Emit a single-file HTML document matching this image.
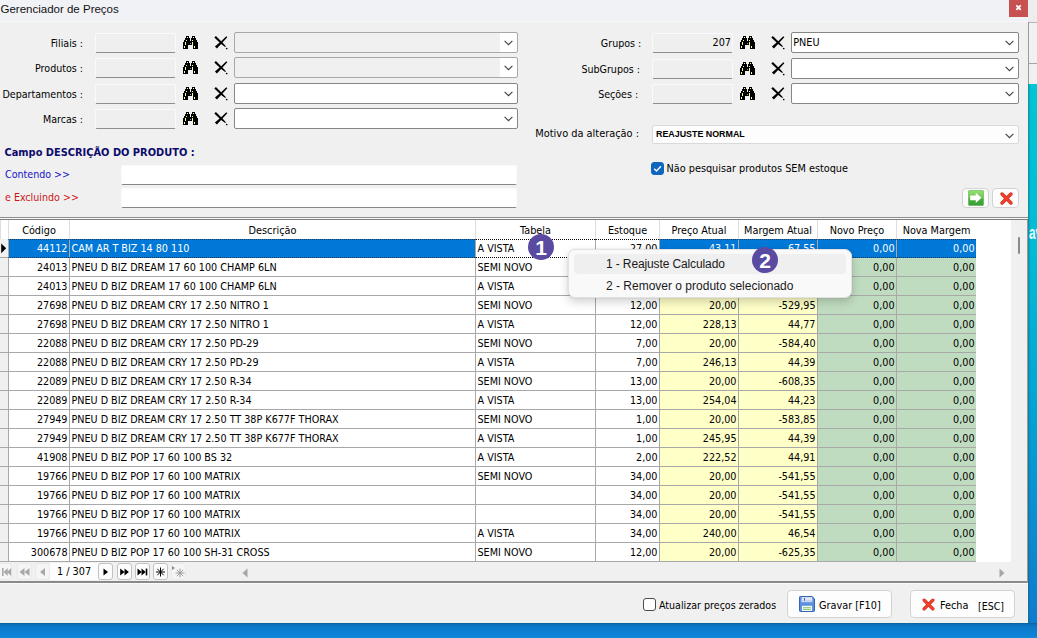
<!DOCTYPE html>
<html lang="pt-BR"><head><meta charset="utf-8"><title>Gerenciador de Preços</title>
<style>
*{box-sizing:border-box;margin:0;padding:0}
html,body{width:1037px;height:638px;overflow:hidden}
body{position:relative;background:#0b7fd0;font-family:"DejaVu Sans Condensed","Liberation Sans",sans-serif;font-size:10.8px;color:#000}
.abs,.abs>*{position:absolute}
#desk-r{left:1028px;top:0;width:9px;height:638px;background:linear-gradient(#00c6d6 0,#00c6d6 84px,#00bcd6 250px,#02a6d6 400px,#0892d4 500px,#0d80cf 600px,#0d7ccc 638px)}
#desk-r i{position:absolute;left:0;width:9px}
#desk-sh{left:1028px;top:84px;width:3px;height:539px;background:linear-gradient(90deg,rgba(40,90,110,.6),rgba(40,90,110,.15) 60%,rgba(40,90,110,0))}
#desk-b{left:0;top:623px;width:1037px;height:15px;background:linear-gradient(#0b5f9c 0,#0a73c0 2px,#0b7ccd 6px,#1087da 15px)}
#win{left:0;top:0;width:1028px;height:623px;background:#f0f0f0}
#title{left:0;top:0;width:1028px;height:22px;background:#f1f2f6;border-bottom:1px solid #f7f7f9}
#title span{left:0.5px;top:2px;font-family:"Liberation Sans",sans-serif;font-size:11.5px;line-height:14px;color:#111;white-space:nowrap}
#close{left:1009px;top:0;width:19px;height:17px;background:#c75050}
.lbl{white-space:nowrap;font-size:10.6px;line-height:14px;text-align:right}
.inp{height:20px;background:#efefef;border:1px solid #fafafa;border-bottom:1px solid #8d8d8d;border-radius:2px}
.cmb{height:21px;background:#fff;border:1px solid #868686;border-radius:2px}
.cmb.dis{background:#f0f0f0;border-color:#a8a8a8}
.cmb svg{position:absolute;right:3.6px;top:7.1px}
.cmb span{position:absolute;left:1.2px;top:2px;line-height:15px;white-space:nowrap}
.edit{background:#fff;border:1px solid #fafafa;border-bottom:1px solid #868686;border-radius:2px}
#grid{left:0;top:219px;width:1028px;height:344px;background:#fff}
.hc{position:absolute;top:220px;height:19px;line-height:21px;text-align:center;background:#fff;border-left:1px solid #dedede;white-space:nowrap}
.c{position:absolute;background:#fff;border-left:1px solid #a8a8a8;border-bottom:1px solid #a8a8a8;white-space:nowrap;overflow:hidden;padding:0 1.5px 0 1.5px;font-size:10.7px}
.c.r{text-align:right}
.c.y{background:#ffffc8}
.c.g{background:#c0dcc0}
.c.ind{background:#f0f0f0;border-left:none;padding:0}
.c.sel{background:#0078d7;color:#fff;border-top:1px dotted #1b3a5c;border-bottom:1px dotted #1b3a5c}
.c.foc{border-top:1px dotted #000;border-bottom:1px dotted #000}
.inp span{position:absolute;right:1px;top:2px;line-height:14px}
.lbl.b{font-weight:bold;font-size:10.95px}
.cmb.mot{border-color:#d9d9d9;background:#fdfdfd}
.cmb.mot span{font-family:"Liberation Sans",sans-serif;font-weight:bold;font-size:8.9px;left:3px;top:1px}
.cmb.dis i{position:absolute;right:0;top:0;width:17px;height:100%;background:#fff;border-radius:0 2px 2px 0}
.chk{width:13px;height:13px;border-radius:3px;border:1px solid #4a4a4a;background:#fff}
.chk.on{background:#0f66bd;border-color:#0f66bd}
.chk svg{position:absolute;left:-1px;top:-1px}
.btn{background:#fdfdfd;border:1px solid #d2d2d2;border-radius:4px}
.btn .t{position:absolute;white-space:nowrap;line-height:14px}
#menu{position:absolute;left:568px;top:249px;width:284px;height:49px;background:#f9f9f9;border:1px solid #e2e2e2;border-radius:7px;box-shadow:0 4px 10px rgba(0,0,0,.18),0 0 2px rgba(0,0,0,.12);font-family:"Liberation Sans",sans-serif;font-size:12px}
#menu .hl{position:absolute;left:5px;top:4px;width:272px;height:20px;border-radius:4px;background:#efefef}
#menu span{position:absolute;left:37px;line-height:14px;white-space:nowrap;color:#1a1a1a}
.badge{position:absolute;width:26px;height:26px;border-radius:13px;background:#5a4aa2;color:#fff;font-family:"Liberation Sans",sans-serif;font-weight:bold;font-size:21px;line-height:27px;text-align:center}

</style></head><body class="abs">
<div id="desk-r"><i style="top:0;height:22px;background:#ededed"></i><i style="top:22px;height:1px;background:#b4b4b4"></i><i style="top:23px;height:40px;background:#f1f1f1"></i><i style="top:63px;height:1px;background:#a4a4a4"></i><i style="top:64px;height:20px;background:#f0f0f0"></i><i style="top:22px;height:62px;width:1px;background:#9a9a9a"></i></div>
<div id="desk-sh"></div>
<div style="position:absolute;left:1028.6px;top:222px;width:14px;height:24px;overflow:hidden;font-family:'Liberation Sans',sans-serif;font-weight:bold;font-size:19px;line-height:22px;color:#e6fbff;white-space:nowrap;transform:scaleX(.62);transform-origin:0 0">av</div>
<div id="desk-b"></div>
<div id="win" class="abs">
<div id="title" class="abs"><span>Gerenciador de Preços</span></div>
<div id="close"><svg width="19" height="17" viewBox="0 0 19 17"><path d="M7.3 5.3 L11.7 9.9 M11.7 5.3 L7.3 9.9" stroke="#fff" stroke-width="1.8" fill="none"/></svg></div>
</div>
<div class="lbl" style="position:absolute;left:0;width:83px;top:36px">Filiais :</div>
<div class="inp" style="position:absolute;left:95px;top:33px;width:81px"></div>
<div style="position:absolute;left:183px;top:36px"><svg class="ico" width="15" height="13" viewBox="0 0 15 13" shape-rendering="crispEdges"><path d="M3 0h3v1h-3zM9 0h3v1h-3zM3 1h3v1h-3zM9 1h3v1h-3zM2 2h5v1h-5zM8 2h5v1h-5zM2 3h5v1h-5zM8 3h5v1h-5zM1 4h6v1h-6zM8 4h6v1h-6zM1 5h13v1h-13zM0 6h15v1h-15zM0 7h15v1h-15zM0 8h15v1h-15zM0 9h5v1h-5zM10 9h5v1h-5zM0 10h5v1h-5zM10 10h5v1h-5zM0 11h5v1h-5zM10 11h5v1h-5zM0 12h5v1h-5zM10 12h5v1h-5z" fill="#000"/><path d="M4 1h1v1h-1zM10 1h1v1h-1zM3 4h1v1h-1zM9 4h1v1h-1zM2 6h1v1h-1zM2 7h1v1h-1zM2 8h1v1h-1zM9 6h1v1h-1zM9 7h1v1h-1zM9 8h1v1h-1zM1 10h1v1h-1zM1 11h1v1h-1zM11 10h1v1h-1zM11 11h1v1h-1z" fill="#ffffa0"/><path d="M7 7h1v1h-1z" fill="#9a9a9a"/></svg></div>
<div style="position:absolute;left:213.8px;top:35.6px"><svg class="ico" width="14" height="14" viewBox="0 0 14 14"><path d="M0.3 1.6 L1.9 0.1 L7.2 5.2 L12.3 0.3 L13.3 1.2 L8.5 6.5 L11.9 10.3 L11.2 11 L7.1 7.9 L2.9 12.4 L0.9 10.5 L5.6 6.4 Z" fill="#000"/><circle cx="12.7" cy="12.5" r="0.85" fill="#000"/></svg></div>
<div class="cmb dis" style="position:absolute;left:234px;top:32px;width:284px"><i></i><svg width="9" height="6" viewBox="0 0 9 6"><path d="M0.6 0.8 L4.5 4.6 L8.4 0.8" fill="none" stroke="#444" stroke-width="1.15"/></svg></div>
<div class="lbl" style="position:absolute;left:0;width:83px;top:61px">Produtos :</div>
<div class="inp" style="position:absolute;left:95px;top:58px;width:81px"></div>
<div style="position:absolute;left:183px;top:61px"><svg class="ico" width="15" height="13" viewBox="0 0 15 13" shape-rendering="crispEdges"><path d="M3 0h3v1h-3zM9 0h3v1h-3zM3 1h3v1h-3zM9 1h3v1h-3zM2 2h5v1h-5zM8 2h5v1h-5zM2 3h5v1h-5zM8 3h5v1h-5zM1 4h6v1h-6zM8 4h6v1h-6zM1 5h13v1h-13zM0 6h15v1h-15zM0 7h15v1h-15zM0 8h15v1h-15zM0 9h5v1h-5zM10 9h5v1h-5zM0 10h5v1h-5zM10 10h5v1h-5zM0 11h5v1h-5zM10 11h5v1h-5zM0 12h5v1h-5zM10 12h5v1h-5z" fill="#000"/><path d="M4 1h1v1h-1zM10 1h1v1h-1zM3 4h1v1h-1zM9 4h1v1h-1zM2 6h1v1h-1zM2 7h1v1h-1zM2 8h1v1h-1zM9 6h1v1h-1zM9 7h1v1h-1zM9 8h1v1h-1zM1 10h1v1h-1zM1 11h1v1h-1zM11 10h1v1h-1zM11 11h1v1h-1z" fill="#ffffa0"/><path d="M7 7h1v1h-1z" fill="#9a9a9a"/></svg></div>
<div style="position:absolute;left:213.8px;top:60.6px"><svg class="ico" width="14" height="14" viewBox="0 0 14 14"><path d="M0.3 1.6 L1.9 0.1 L7.2 5.2 L12.3 0.3 L13.3 1.2 L8.5 6.5 L11.9 10.3 L11.2 11 L7.1 7.9 L2.9 12.4 L0.9 10.5 L5.6 6.4 Z" fill="#000"/><circle cx="12.7" cy="12.5" r="0.85" fill="#000"/></svg></div>
<div class="cmb dis" style="position:absolute;left:234px;top:57px;width:284px"><i></i><svg width="9" height="6" viewBox="0 0 9 6"><path d="M0.6 0.8 L4.5 4.6 L8.4 0.8" fill="none" stroke="#444" stroke-width="1.15"/></svg></div>
<div class="lbl" style="position:absolute;left:0;width:83px;top:87px">Departamentos :</div>
<div class="inp" style="position:absolute;left:95px;top:84px;width:81px"></div>
<div style="position:absolute;left:183px;top:87px"><svg class="ico" width="15" height="13" viewBox="0 0 15 13" shape-rendering="crispEdges"><path d="M3 0h3v1h-3zM9 0h3v1h-3zM3 1h3v1h-3zM9 1h3v1h-3zM2 2h5v1h-5zM8 2h5v1h-5zM2 3h5v1h-5zM8 3h5v1h-5zM1 4h6v1h-6zM8 4h6v1h-6zM1 5h13v1h-13zM0 6h15v1h-15zM0 7h15v1h-15zM0 8h15v1h-15zM0 9h5v1h-5zM10 9h5v1h-5zM0 10h5v1h-5zM10 10h5v1h-5zM0 11h5v1h-5zM10 11h5v1h-5zM0 12h5v1h-5zM10 12h5v1h-5z" fill="#000"/><path d="M4 1h1v1h-1zM10 1h1v1h-1zM3 4h1v1h-1zM9 4h1v1h-1zM2 6h1v1h-1zM2 7h1v1h-1zM2 8h1v1h-1zM9 6h1v1h-1zM9 7h1v1h-1zM9 8h1v1h-1zM1 10h1v1h-1zM1 11h1v1h-1zM11 10h1v1h-1zM11 11h1v1h-1z" fill="#ffffa0"/><path d="M7 7h1v1h-1z" fill="#9a9a9a"/></svg></div>
<div style="position:absolute;left:213.8px;top:86.6px"><svg class="ico" width="14" height="14" viewBox="0 0 14 14"><path d="M0.3 1.6 L1.9 0.1 L7.2 5.2 L12.3 0.3 L13.3 1.2 L8.5 6.5 L11.9 10.3 L11.2 11 L7.1 7.9 L2.9 12.4 L0.9 10.5 L5.6 6.4 Z" fill="#000"/><circle cx="12.7" cy="12.5" r="0.85" fill="#000"/></svg></div>
<div class="cmb" style="position:absolute;left:234px;top:83px;width:284px"><i></i><svg width="9" height="6" viewBox="0 0 9 6"><path d="M0.6 0.8 L4.5 4.6 L8.4 0.8" fill="none" stroke="#444" stroke-width="1.15"/></svg></div>
<div class="lbl" style="position:absolute;left:0;width:83px;top:112px">Marcas :</div>
<div class="inp" style="position:absolute;left:95px;top:109px;width:81px"></div>
<div style="position:absolute;left:183px;top:112px"><svg class="ico" width="15" height="13" viewBox="0 0 15 13" shape-rendering="crispEdges"><path d="M3 0h3v1h-3zM9 0h3v1h-3zM3 1h3v1h-3zM9 1h3v1h-3zM2 2h5v1h-5zM8 2h5v1h-5zM2 3h5v1h-5zM8 3h5v1h-5zM1 4h6v1h-6zM8 4h6v1h-6zM1 5h13v1h-13zM0 6h15v1h-15zM0 7h15v1h-15zM0 8h15v1h-15zM0 9h5v1h-5zM10 9h5v1h-5zM0 10h5v1h-5zM10 10h5v1h-5zM0 11h5v1h-5zM10 11h5v1h-5zM0 12h5v1h-5zM10 12h5v1h-5z" fill="#000"/><path d="M4 1h1v1h-1zM10 1h1v1h-1zM3 4h1v1h-1zM9 4h1v1h-1zM2 6h1v1h-1zM2 7h1v1h-1zM2 8h1v1h-1zM9 6h1v1h-1zM9 7h1v1h-1zM9 8h1v1h-1zM1 10h1v1h-1zM1 11h1v1h-1zM11 10h1v1h-1zM11 11h1v1h-1z" fill="#ffffa0"/><path d="M7 7h1v1h-1z" fill="#9a9a9a"/></svg></div>
<div style="position:absolute;left:213.8px;top:111.6px"><svg class="ico" width="14" height="14" viewBox="0 0 14 14"><path d="M0.3 1.6 L1.9 0.1 L7.2 5.2 L12.3 0.3 L13.3 1.2 L8.5 6.5 L11.9 10.3 L11.2 11 L7.1 7.9 L2.9 12.4 L0.9 10.5 L5.6 6.4 Z" fill="#000"/><circle cx="12.7" cy="12.5" r="0.85" fill="#000"/></svg></div>
<div class="cmb" style="position:absolute;left:234px;top:108px;width:284px"><i></i><svg width="9" height="6" viewBox="0 0 9 6"><path d="M0.6 0.8 L4.5 4.6 L8.4 0.8" fill="none" stroke="#444" stroke-width="1.15"/></svg></div>
<div class="lbl" style="position:absolute;left:541.3px;width:100px;top:36px">Grupos :</div>
<div class="inp" style="position:absolute;left:652px;top:33px;width:81px"><span>207</span></div>
<div style="position:absolute;left:740px;top:36px"><svg class="ico" width="15" height="13" viewBox="0 0 15 13" shape-rendering="crispEdges"><path d="M3 0h3v1h-3zM9 0h3v1h-3zM3 1h3v1h-3zM9 1h3v1h-3zM2 2h5v1h-5zM8 2h5v1h-5zM2 3h5v1h-5zM8 3h5v1h-5zM1 4h6v1h-6zM8 4h6v1h-6zM1 5h13v1h-13zM0 6h15v1h-15zM0 7h15v1h-15zM0 8h15v1h-15zM0 9h5v1h-5zM10 9h5v1h-5zM0 10h5v1h-5zM10 10h5v1h-5zM0 11h5v1h-5zM10 11h5v1h-5zM0 12h5v1h-5zM10 12h5v1h-5z" fill="#000"/><path d="M4 1h1v1h-1zM10 1h1v1h-1zM3 4h1v1h-1zM9 4h1v1h-1zM2 6h1v1h-1zM2 7h1v1h-1zM2 8h1v1h-1zM9 6h1v1h-1zM9 7h1v1h-1zM9 8h1v1h-1zM1 10h1v1h-1zM1 11h1v1h-1zM11 10h1v1h-1zM11 11h1v1h-1z" fill="#ffffa0"/><path d="M7 7h1v1h-1z" fill="#9a9a9a"/></svg></div>
<div style="position:absolute;left:771.3px;top:35.6px"><svg class="ico" width="14" height="14" viewBox="0 0 14 14"><path d="M0.3 1.6 L1.9 0.1 L7.2 5.2 L12.3 0.3 L13.3 1.2 L8.5 6.5 L11.9 10.3 L11.2 11 L7.1 7.9 L2.9 12.4 L0.9 10.5 L5.6 6.4 Z" fill="#000"/><circle cx="12.7" cy="12.5" r="0.85" fill="#000"/></svg></div>
<div class="cmb" style="position:absolute;left:791px;top:32px;width:228px"><span>PNEU</span><svg width="9" height="6" viewBox="0 0 9 6"><path d="M0.6 0.8 L4.5 4.6 L8.4 0.8" fill="none" stroke="#444" stroke-width="1.15"/></svg></div>
<div class="lbl" style="position:absolute;left:540px;width:100px;top:62px">SubGrupos :</div>
<div class="inp" style="position:absolute;left:652px;top:59px;width:81px"><span></span></div>
<div style="position:absolute;left:740px;top:62px"><svg class="ico" width="15" height="13" viewBox="0 0 15 13" shape-rendering="crispEdges"><path d="M3 0h3v1h-3zM9 0h3v1h-3zM3 1h3v1h-3zM9 1h3v1h-3zM2 2h5v1h-5zM8 2h5v1h-5zM2 3h5v1h-5zM8 3h5v1h-5zM1 4h6v1h-6zM8 4h6v1h-6zM1 5h13v1h-13zM0 6h15v1h-15zM0 7h15v1h-15zM0 8h15v1h-15zM0 9h5v1h-5zM10 9h5v1h-5zM0 10h5v1h-5zM10 10h5v1h-5zM0 11h5v1h-5zM10 11h5v1h-5zM0 12h5v1h-5zM10 12h5v1h-5z" fill="#000"/><path d="M4 1h1v1h-1zM10 1h1v1h-1zM3 4h1v1h-1zM9 4h1v1h-1zM2 6h1v1h-1zM2 7h1v1h-1zM2 8h1v1h-1zM9 6h1v1h-1zM9 7h1v1h-1zM9 8h1v1h-1zM1 10h1v1h-1zM1 11h1v1h-1zM11 10h1v1h-1zM11 11h1v1h-1z" fill="#ffffa0"/><path d="M7 7h1v1h-1z" fill="#9a9a9a"/></svg></div>
<div style="position:absolute;left:771.3px;top:61.6px"><svg class="ico" width="14" height="14" viewBox="0 0 14 14"><path d="M0.3 1.6 L1.9 0.1 L7.2 5.2 L12.3 0.3 L13.3 1.2 L8.5 6.5 L11.9 10.3 L11.2 11 L7.1 7.9 L2.9 12.4 L0.9 10.5 L5.6 6.4 Z" fill="#000"/><circle cx="12.7" cy="12.5" r="0.85" fill="#000"/></svg></div>
<div class="cmb" style="position:absolute;left:791px;top:58px;width:228px"><span></span><svg width="9" height="6" viewBox="0 0 9 6"><path d="M0.6 0.8 L4.5 4.6 L8.4 0.8" fill="none" stroke="#444" stroke-width="1.15"/></svg></div>
<div class="lbl" style="position:absolute;left:538.2px;width:100px;top:87px">Seções :</div>
<div class="inp" style="position:absolute;left:652px;top:84px;width:81px"><span></span></div>
<div style="position:absolute;left:740px;top:87px"><svg class="ico" width="15" height="13" viewBox="0 0 15 13" shape-rendering="crispEdges"><path d="M3 0h3v1h-3zM9 0h3v1h-3zM3 1h3v1h-3zM9 1h3v1h-3zM2 2h5v1h-5zM8 2h5v1h-5zM2 3h5v1h-5zM8 3h5v1h-5zM1 4h6v1h-6zM8 4h6v1h-6zM1 5h13v1h-13zM0 6h15v1h-15zM0 7h15v1h-15zM0 8h15v1h-15zM0 9h5v1h-5zM10 9h5v1h-5zM0 10h5v1h-5zM10 10h5v1h-5zM0 11h5v1h-5zM10 11h5v1h-5zM0 12h5v1h-5zM10 12h5v1h-5z" fill="#000"/><path d="M4 1h1v1h-1zM10 1h1v1h-1zM3 4h1v1h-1zM9 4h1v1h-1zM2 6h1v1h-1zM2 7h1v1h-1zM2 8h1v1h-1zM9 6h1v1h-1zM9 7h1v1h-1zM9 8h1v1h-1zM1 10h1v1h-1zM1 11h1v1h-1zM11 10h1v1h-1zM11 11h1v1h-1z" fill="#ffffa0"/><path d="M7 7h1v1h-1z" fill="#9a9a9a"/></svg></div>
<div style="position:absolute;left:771.3px;top:86.6px"><svg class="ico" width="14" height="14" viewBox="0 0 14 14"><path d="M0.3 1.6 L1.9 0.1 L7.2 5.2 L12.3 0.3 L13.3 1.2 L8.5 6.5 L11.9 10.3 L11.2 11 L7.1 7.9 L2.9 12.4 L0.9 10.5 L5.6 6.4 Z" fill="#000"/><circle cx="12.7" cy="12.5" r="0.85" fill="#000"/></svg></div>
<div class="cmb" style="position:absolute;left:791px;top:83px;width:228px"><span></span><svg width="9" height="6" viewBox="0 0 9 6"><path d="M0.6 0.8 L4.5 4.6 L8.4 0.8" fill="none" stroke="#444" stroke-width="1.15"/></svg></div>
<div class="lbl" style="position:absolute;left:500px;width:139px;top:127px;font-size:10.9px">Motivo da alteração :</div>
<div class="cmb mot" style="position:absolute;left:652px;top:125px;width:367px;height:19px"><span>REAJUSTE NORMAL</span><svg width="9" height="6" viewBox="0 0 9 6"><path d="M0.6 0.8 L4.5 4.6 L8.4 0.8" fill="none" stroke="#444" stroke-width="1.15"/></svg></div>
<div class="chk on" style="position:absolute;left:651px;top:162px"><svg width="13" height="13" viewBox="0 0 13 13"><path d="M3.2 6.7 L5.5 9 L9.9 4.2" fill="none" stroke="#fff" stroke-width="1.3"/></svg></div>
<div class="lbl" style="position:absolute;left:666.5px;top:162px;text-align:left;font-size:10.8px">Não pesquisar produtos SEM estoque</div>
<div class="lbl b" style="position:absolute;left:4.5px;top:146px;text-align:left;color:#0b0b6b">Campo DESCRIÇÃO DO PRODUTO :</div>
<div class="lbl" style="position:absolute;left:5px;top:167px;text-align:left;color:#1414c8">Contendo &gt;&gt;</div>
<div class="lbl" style="position:absolute;left:5px;top:190px;text-align:left;color:#cc1616">e Excluindo &gt;&gt;</div>
<div class="edit" style="position:absolute;left:121px;top:165px;width:396px;height:20px"></div>
<div class="edit" style="position:absolute;left:121px;top:188px;width:396px;height:20px"></div>
<div class="btn" style="position:absolute;left:962px;top:188px;width:27px;height:20px"><svg style="position:absolute;left:5px;top:1px" width="16" height="16" viewBox="0 0 17 17"><defs><linearGradient id="gg" x1="0" y1="0" x2="0" y2="1"><stop offset="0" stop-color="#9ade78"/><stop offset="0.5" stop-color="#6cc552"/><stop offset="0.55" stop-color="#46ad3c"/><stop offset="1" stop-color="#3aa038"/></linearGradient></defs><rect x="0.5" y="0.5" width="16" height="16" rx="1" fill="url(#gg)" stroke="#4cae3e" stroke-width="0.6"/><path d="M2.3 5.8 H8.3 V2.8 L14.3 8.3 L8.3 13.8 V10.8 H2.3 Z" fill="#fff"/></svg></div>
<div class="btn" style="position:absolute;left:992px;top:188px;width:27px;height:20px"><svg style="position:absolute;left:6.5px;top:3px" width="13" height="13" viewBox="0 0 14 14"><path d="M2.2 2.2 L11.8 11.8 M11.8 2.2 L2.2 11.8" stroke="#c8281a" stroke-width="3.6" stroke-linecap="round"/><path d="M2.2 2.2 L11.8 11.8 M11.8 2.2 L2.2 11.8" stroke="#f4402a" stroke-width="2.4" stroke-linecap="round"/></svg></div>
<div style="position:absolute;left:0;top:217px;width:1028px;height:1px;background:#8c8c8c"></div>
<div style="position:absolute;left:0;top:218px;width:1028px;height:1px;background:#fdfdfd"></div>
<div style="position:absolute;left:0;top:219px;width:1028px;height:1px;background:#7a7a7a;z-index:3"></div>
<div id="grid"></div>
<div class="hc" style="left:0px;width:8px"></div>
<div class="hc" style="left:8px;width:61px">Código</div>
<div class="hc" style="left:69px;width:406px">Descrição</div>
<div class="hc" style="left:475px;width:120px">Tabela</div>
<div class="hc" style="left:595px;width:64px">Estoque</div>
<div class="hc" style="left:659px;width:79px">Preço Atual</div>
<div class="hc" style="left:738px;width:79px">Margem Atual</div>
<div class="hc" style="left:817px;width:79px">Novo Preço</div>
<div class="hc" style="left:896px;width:80px">Nova Margem</div>
<div class="c ind" style="left:0px;top:239px;width:8px;height:19px;line-height:20px"><svg width="9" height="18" viewBox="0 0 9 18"><path d="M1.2 4.5 L6.2 9.3 L1.2 14.2 Z" fill="#000"/></svg></div>
<div class="c r sel" style="left:8px;top:239px;width:61px;height:19px;line-height:18px">44112</div>
<div class="c sel" style="left:69px;top:239px;width:406px;height:19px;line-height:18px">CAM AR T BIZ 14 80 110</div>
<div class="c foc" style="left:475px;top:239px;width:120px;height:19px;line-height:18px">A VISTA</div>
<div class="c r foc" style="left:595px;top:239px;width:64px;height:19px;line-height:18px">27,00</div>
<div class="c r y sel" style="left:659px;top:239px;width:79px;height:19px;line-height:18px">43,11</div>
<div class="c r y sel" style="left:738px;top:239px;width:79px;height:19px;line-height:18px">67,55</div>
<div class="c r g sel" style="left:817px;top:239px;width:79px;height:19px;line-height:18px">0,00</div>
<div class="c r g sel" style="left:896px;top:239px;width:80px;height:19px;line-height:18px">0,00</div>
<div class="c ind" style="left:0px;top:258px;width:8px;height:19px;line-height:20px"></div>
<div class="c r" style="left:8px;top:258px;width:61px;height:19px;line-height:20px">24013</div>
<div class="c" style="left:69px;top:258px;width:406px;height:19px;line-height:20px">PNEU D BIZ DREAM 17 60 100 CHAMP 6LN</div>
<div class="c" style="left:475px;top:258px;width:120px;height:19px;line-height:20px">SEMI NOVO</div>
<div class="c r" style="left:595px;top:258px;width:64px;height:19px;line-height:20px">27,00</div>
<div class="c r y" style="left:659px;top:258px;width:79px;height:19px;line-height:20px">20,00</div>
<div class="c r y" style="left:738px;top:258px;width:79px;height:19px;line-height:20px">-529,95</div>
<div class="c r g" style="left:817px;top:258px;width:79px;height:19px;line-height:20px">0,00</div>
<div class="c r g" style="left:896px;top:258px;width:80px;height:19px;line-height:20px">0,00</div>
<div class="c ind" style="left:0px;top:277px;width:8px;height:19px;line-height:20px"></div>
<div class="c r" style="left:8px;top:277px;width:61px;height:19px;line-height:20px">24013</div>
<div class="c" style="left:69px;top:277px;width:406px;height:19px;line-height:20px">PNEU D BIZ DREAM 17 60 100 CHAMP 6LN</div>
<div class="c" style="left:475px;top:277px;width:120px;height:19px;line-height:20px">A VISTA</div>
<div class="c r" style="left:595px;top:277px;width:64px;height:19px;line-height:20px">27,00</div>
<div class="c r y" style="left:659px;top:277px;width:79px;height:19px;line-height:20px">228,13</div>
<div class="c r y" style="left:738px;top:277px;width:79px;height:19px;line-height:20px">44,77</div>
<div class="c r g" style="left:817px;top:277px;width:79px;height:19px;line-height:20px">0,00</div>
<div class="c r g" style="left:896px;top:277px;width:80px;height:19px;line-height:20px">0,00</div>
<div class="c ind" style="left:0px;top:296px;width:8px;height:19px;line-height:20px"></div>
<div class="c r" style="left:8px;top:296px;width:61px;height:19px;line-height:20px">27698</div>
<div class="c" style="left:69px;top:296px;width:406px;height:19px;line-height:20px">PNEU D BIZ DREAM CRY 17 2.50 NITRO 1</div>
<div class="c" style="left:475px;top:296px;width:120px;height:19px;line-height:20px">SEMI NOVO</div>
<div class="c r" style="left:595px;top:296px;width:64px;height:19px;line-height:20px">12,00</div>
<div class="c r y" style="left:659px;top:296px;width:79px;height:19px;line-height:20px">20,00</div>
<div class="c r y" style="left:738px;top:296px;width:79px;height:19px;line-height:20px">-529,95</div>
<div class="c r g" style="left:817px;top:296px;width:79px;height:19px;line-height:20px">0,00</div>
<div class="c r g" style="left:896px;top:296px;width:80px;height:19px;line-height:20px">0,00</div>
<div class="c ind" style="left:0px;top:315px;width:8px;height:19px;line-height:20px"></div>
<div class="c r" style="left:8px;top:315px;width:61px;height:19px;line-height:20px">27698</div>
<div class="c" style="left:69px;top:315px;width:406px;height:19px;line-height:20px">PNEU D BIZ DREAM CRY 17 2.50 NITRO 1</div>
<div class="c" style="left:475px;top:315px;width:120px;height:19px;line-height:20px">A VISTA</div>
<div class="c r" style="left:595px;top:315px;width:64px;height:19px;line-height:20px">12,00</div>
<div class="c r y" style="left:659px;top:315px;width:79px;height:19px;line-height:20px">228,13</div>
<div class="c r y" style="left:738px;top:315px;width:79px;height:19px;line-height:20px">44,77</div>
<div class="c r g" style="left:817px;top:315px;width:79px;height:19px;line-height:20px">0,00</div>
<div class="c r g" style="left:896px;top:315px;width:80px;height:19px;line-height:20px">0,00</div>
<div class="c ind" style="left:0px;top:334px;width:8px;height:19px;line-height:20px"></div>
<div class="c r" style="left:8px;top:334px;width:61px;height:19px;line-height:20px">22088</div>
<div class="c" style="left:69px;top:334px;width:406px;height:19px;line-height:20px">PNEU D BIZ DREAM CRY 17 2.50 PD-29</div>
<div class="c" style="left:475px;top:334px;width:120px;height:19px;line-height:20px">SEMI NOVO</div>
<div class="c r" style="left:595px;top:334px;width:64px;height:19px;line-height:20px">7,00</div>
<div class="c r y" style="left:659px;top:334px;width:79px;height:19px;line-height:20px">20,00</div>
<div class="c r y" style="left:738px;top:334px;width:79px;height:19px;line-height:20px">-584,40</div>
<div class="c r g" style="left:817px;top:334px;width:79px;height:19px;line-height:20px">0,00</div>
<div class="c r g" style="left:896px;top:334px;width:80px;height:19px;line-height:20px">0,00</div>
<div class="c ind" style="left:0px;top:353px;width:8px;height:19px;line-height:20px"></div>
<div class="c r" style="left:8px;top:353px;width:61px;height:19px;line-height:20px">22088</div>
<div class="c" style="left:69px;top:353px;width:406px;height:19px;line-height:20px">PNEU D BIZ DREAM CRY 17 2.50 PD-29</div>
<div class="c" style="left:475px;top:353px;width:120px;height:19px;line-height:20px">A VISTA</div>
<div class="c r" style="left:595px;top:353px;width:64px;height:19px;line-height:20px">7,00</div>
<div class="c r y" style="left:659px;top:353px;width:79px;height:19px;line-height:20px">246,13</div>
<div class="c r y" style="left:738px;top:353px;width:79px;height:19px;line-height:20px">44,39</div>
<div class="c r g" style="left:817px;top:353px;width:79px;height:19px;line-height:20px">0,00</div>
<div class="c r g" style="left:896px;top:353px;width:80px;height:19px;line-height:20px">0,00</div>
<div class="c ind" style="left:0px;top:372px;width:8px;height:19px;line-height:20px"></div>
<div class="c r" style="left:8px;top:372px;width:61px;height:19px;line-height:20px">22089</div>
<div class="c" style="left:69px;top:372px;width:406px;height:19px;line-height:20px">PNEU D BIZ DREAM CRY 17 2.50 R-34</div>
<div class="c" style="left:475px;top:372px;width:120px;height:19px;line-height:20px">SEMI NOVO</div>
<div class="c r" style="left:595px;top:372px;width:64px;height:19px;line-height:20px">13,00</div>
<div class="c r y" style="left:659px;top:372px;width:79px;height:19px;line-height:20px">20,00</div>
<div class="c r y" style="left:738px;top:372px;width:79px;height:19px;line-height:20px">-608,35</div>
<div class="c r g" style="left:817px;top:372px;width:79px;height:19px;line-height:20px">0,00</div>
<div class="c r g" style="left:896px;top:372px;width:80px;height:19px;line-height:20px">0,00</div>
<div class="c ind" style="left:0px;top:391px;width:8px;height:19px;line-height:20px"></div>
<div class="c r" style="left:8px;top:391px;width:61px;height:19px;line-height:20px">22089</div>
<div class="c" style="left:69px;top:391px;width:406px;height:19px;line-height:20px">PNEU D BIZ DREAM CRY 17 2.50 R-34</div>
<div class="c" style="left:475px;top:391px;width:120px;height:19px;line-height:20px">A VISTA</div>
<div class="c r" style="left:595px;top:391px;width:64px;height:19px;line-height:20px">13,00</div>
<div class="c r y" style="left:659px;top:391px;width:79px;height:19px;line-height:20px">254,04</div>
<div class="c r y" style="left:738px;top:391px;width:79px;height:19px;line-height:20px">44,23</div>
<div class="c r g" style="left:817px;top:391px;width:79px;height:19px;line-height:20px">0,00</div>
<div class="c r g" style="left:896px;top:391px;width:80px;height:19px;line-height:20px">0,00</div>
<div class="c ind" style="left:0px;top:410px;width:8px;height:19px;line-height:20px"></div>
<div class="c r" style="left:8px;top:410px;width:61px;height:19px;line-height:20px">27949</div>
<div class="c" style="left:69px;top:410px;width:406px;height:19px;line-height:20px">PNEU D BIZ DREAM CRY 17 2.50 TT 38P K677F THORAX</div>
<div class="c" style="left:475px;top:410px;width:120px;height:19px;line-height:20px">SEMI NOVO</div>
<div class="c r" style="left:595px;top:410px;width:64px;height:19px;line-height:20px">1,00</div>
<div class="c r y" style="left:659px;top:410px;width:79px;height:19px;line-height:20px">20,00</div>
<div class="c r y" style="left:738px;top:410px;width:79px;height:19px;line-height:20px">-583,85</div>
<div class="c r g" style="left:817px;top:410px;width:79px;height:19px;line-height:20px">0,00</div>
<div class="c r g" style="left:896px;top:410px;width:80px;height:19px;line-height:20px">0,00</div>
<div class="c ind" style="left:0px;top:429px;width:8px;height:19px;line-height:20px"></div>
<div class="c r" style="left:8px;top:429px;width:61px;height:19px;line-height:20px">27949</div>
<div class="c" style="left:69px;top:429px;width:406px;height:19px;line-height:20px">PNEU D BIZ DREAM CRY 17 2.50 TT 38P K677F THORAX</div>
<div class="c" style="left:475px;top:429px;width:120px;height:19px;line-height:20px">A VISTA</div>
<div class="c r" style="left:595px;top:429px;width:64px;height:19px;line-height:20px">1,00</div>
<div class="c r y" style="left:659px;top:429px;width:79px;height:19px;line-height:20px">245,95</div>
<div class="c r y" style="left:738px;top:429px;width:79px;height:19px;line-height:20px">44,39</div>
<div class="c r g" style="left:817px;top:429px;width:79px;height:19px;line-height:20px">0,00</div>
<div class="c r g" style="left:896px;top:429px;width:80px;height:19px;line-height:20px">0,00</div>
<div class="c ind" style="left:0px;top:448px;width:8px;height:19px;line-height:20px"></div>
<div class="c r" style="left:8px;top:448px;width:61px;height:19px;line-height:20px">41908</div>
<div class="c" style="left:69px;top:448px;width:406px;height:19px;line-height:20px">PNEU D BIZ POP 17 60 100 BS 32</div>
<div class="c" style="left:475px;top:448px;width:120px;height:19px;line-height:20px">A VISTA</div>
<div class="c r" style="left:595px;top:448px;width:64px;height:19px;line-height:20px">2,00</div>
<div class="c r y" style="left:659px;top:448px;width:79px;height:19px;line-height:20px">222,52</div>
<div class="c r y" style="left:738px;top:448px;width:79px;height:19px;line-height:20px">44,91</div>
<div class="c r g" style="left:817px;top:448px;width:79px;height:19px;line-height:20px">0,00</div>
<div class="c r g" style="left:896px;top:448px;width:80px;height:19px;line-height:20px">0,00</div>
<div class="c ind" style="left:0px;top:467px;width:8px;height:19px;line-height:20px"></div>
<div class="c r" style="left:8px;top:467px;width:61px;height:19px;line-height:20px">19766</div>
<div class="c" style="left:69px;top:467px;width:406px;height:19px;line-height:20px">PNEU D BIZ POP 17 60 100 MATRIX</div>
<div class="c" style="left:475px;top:467px;width:120px;height:19px;line-height:20px">SEMI NOVO</div>
<div class="c r" style="left:595px;top:467px;width:64px;height:19px;line-height:20px">34,00</div>
<div class="c r y" style="left:659px;top:467px;width:79px;height:19px;line-height:20px">20,00</div>
<div class="c r y" style="left:738px;top:467px;width:79px;height:19px;line-height:20px">-541,55</div>
<div class="c r g" style="left:817px;top:467px;width:79px;height:19px;line-height:20px">0,00</div>
<div class="c r g" style="left:896px;top:467px;width:80px;height:19px;line-height:20px">0,00</div>
<div class="c ind" style="left:0px;top:486px;width:8px;height:19px;line-height:20px"></div>
<div class="c r" style="left:8px;top:486px;width:61px;height:19px;line-height:20px">19766</div>
<div class="c" style="left:69px;top:486px;width:406px;height:19px;line-height:20px">PNEU D BIZ POP 17 60 100 MATRIX</div>
<div class="c" style="left:475px;top:486px;width:120px;height:19px;line-height:20px"></div>
<div class="c r" style="left:595px;top:486px;width:64px;height:19px;line-height:20px">34,00</div>
<div class="c r y" style="left:659px;top:486px;width:79px;height:19px;line-height:20px">20,00</div>
<div class="c r y" style="left:738px;top:486px;width:79px;height:19px;line-height:20px">-541,55</div>
<div class="c r g" style="left:817px;top:486px;width:79px;height:19px;line-height:20px">0,00</div>
<div class="c r g" style="left:896px;top:486px;width:80px;height:19px;line-height:20px">0,00</div>
<div class="c ind" style="left:0px;top:505px;width:8px;height:19px;line-height:20px"></div>
<div class="c r" style="left:8px;top:505px;width:61px;height:19px;line-height:20px">19766</div>
<div class="c" style="left:69px;top:505px;width:406px;height:19px;line-height:20px">PNEU D BIZ POP 17 60 100 MATRIX</div>
<div class="c" style="left:475px;top:505px;width:120px;height:19px;line-height:20px"></div>
<div class="c r" style="left:595px;top:505px;width:64px;height:19px;line-height:20px">34,00</div>
<div class="c r y" style="left:659px;top:505px;width:79px;height:19px;line-height:20px">20,00</div>
<div class="c r y" style="left:738px;top:505px;width:79px;height:19px;line-height:20px">-541,55</div>
<div class="c r g" style="left:817px;top:505px;width:79px;height:19px;line-height:20px">0,00</div>
<div class="c r g" style="left:896px;top:505px;width:80px;height:19px;line-height:20px">0,00</div>
<div class="c ind" style="left:0px;top:524px;width:8px;height:19px;line-height:20px"></div>
<div class="c r" style="left:8px;top:524px;width:61px;height:19px;line-height:20px">19766</div>
<div class="c" style="left:69px;top:524px;width:406px;height:19px;line-height:20px">PNEU D BIZ POP 17 60 100 MATRIX</div>
<div class="c" style="left:475px;top:524px;width:120px;height:19px;line-height:20px">A VISTA</div>
<div class="c r" style="left:595px;top:524px;width:64px;height:19px;line-height:20px">34,00</div>
<div class="c r y" style="left:659px;top:524px;width:79px;height:19px;line-height:20px">240,00</div>
<div class="c r y" style="left:738px;top:524px;width:79px;height:19px;line-height:20px">46,54</div>
<div class="c r g" style="left:817px;top:524px;width:79px;height:19px;line-height:20px">0,00</div>
<div class="c r g" style="left:896px;top:524px;width:80px;height:19px;line-height:20px">0,00</div>
<div class="c ind" style="left:0px;top:543px;width:8px;height:19px;line-height:20px"></div>
<div class="c r" style="left:8px;top:543px;width:61px;height:19px;line-height:20px">300678</div>
<div class="c" style="left:69px;top:543px;width:406px;height:19px;line-height:20px">PNEU D BIZ POP 17 60 100 SH-31 CROSS</div>
<div class="c" style="left:475px;top:543px;width:120px;height:19px;line-height:20px">SEMI NOVO</div>
<div class="c r" style="left:595px;top:543px;width:64px;height:19px;line-height:20px">12,00</div>
<div class="c r y" style="left:659px;top:543px;width:79px;height:19px;line-height:20px">20,00</div>
<div class="c r y" style="left:738px;top:543px;width:79px;height:19px;line-height:20px">-625,35</div>
<div class="c r g" style="left:817px;top:543px;width:79px;height:19px;line-height:20px">0,00</div>
<div class="c r g" style="left:896px;top:543px;width:80px;height:19px;line-height:20px">0,00</div>
<div style="position:absolute;left:0;top:562px;width:1028px;height:19px;background:#f0f0f0"></div>
<div style="position:absolute;left:-3px;top:563px;width:15px;height:17px;border:1px solid #e9e9e9;background:#f5f5f5;border-radius:3px;"><svg style="position:absolute;left:-1px;top:-0.5px" width="15" height="16" viewBox="-7.5 -8 15 16"><rect x="-2.5" y="-4.0" width="1.6" height="8" fill="#a8a8a8"/><path d="M3.2 -4.0 L-0.8 0 L3.2 4.0 Z" fill="#a8a8a8"/><path d="M6.6 -4.0 L2.6 0 L6.6 4.0 Z" fill="#a8a8a8"/></svg></div>
<div style="position:absolute;left:16.5px;top:563px;width:15px;height:17px;border:1px solid #e9e9e9;background:#f5f5f5;border-radius:3px;"><svg style="position:absolute;left:-1px;top:-0.5px" width="15" height="16" viewBox="-7.5 -8 15 16"><path d="M0 -4.0 L-5 0 L0 4.0 Z" fill="#a8a8a8"/><path d="M5 -4.0 L0 0 L5 4.0 Z" fill="#a8a8a8"/></svg></div>
<div style="position:absolute;left:34.5px;top:563px;width:15px;height:17px;border:1px solid #e9e9e9;background:#f5f5f5;border-radius:3px;"><svg style="position:absolute;left:-1px;top:-0.5px" width="15" height="16" viewBox="-7.5 -8 15 16"><path d="M2.5 -4.0 L-2.5 0 L2.5 4.0 Z" fill="#a8a8a8"/></svg></div>
<div style="position:absolute;left:50px;top:563px;width:48px;height:17px;background:#fdfdfd;text-align:center;line-height:17px;white-space:nowrap">1 / 307</div>
<div style="position:absolute;left:98px;top:563px;width:15px;height:17px;border:1px solid #c2c2c2;background:#fcfcfc;border-radius:3px;"><svg style="position:absolute;left:-1px;top:-0.5px" width="15" height="16" viewBox="-7.5 -8 15 16"><path d="M-2 -3.4 L2.5999999999999996 0 L-2 3.4 Z" fill="#000"/></svg></div>
<div style="position:absolute;left:116.5px;top:563px;width:15px;height:17px;border:1px solid #c2c2c2;background:#fcfcfc;border-radius:3px;"><svg style="position:absolute;left:-1px;top:-0.5px" width="15" height="16" viewBox="-7.5 -8 15 16"><path d="M-4.3 -3.4 L0.10000000000000053 0 L-4.3 3.4 Z" fill="#000"/><path d="M0 -3.4 L4.4 0 L0 3.4 Z" fill="#000"/></svg></div>
<div style="position:absolute;left:134.5px;top:563px;width:15px;height:17px;border:1px solid #c2c2c2;background:#fcfcfc;border-radius:3px;"><svg style="position:absolute;left:-1px;top:-0.5px" width="15" height="16" viewBox="-7.5 -8 15 16"><path d="M-5 -3.4 L-0.7999999999999998 0 L-5 3.4 Z" fill="#000"/><path d="M-1 -3.4 L3.2 0 L-1 3.4 Z" fill="#000"/><rect x="3.2" y="-3.4" width="1.6" height="6.8" fill="#000"/></svg></div>
<div style="position:absolute;left:152.5px;top:563px;width:15px;height:17px;border:1px solid #c2c2c2;background:#fcfcfc;border-radius:3px;"><svg style="position:absolute;left:-1px;top:-0.5px" width="15" height="16" viewBox="-7.5 -8 15 16"><path d="M0 -4.5V4.5M-4.5 0H4.5M-3.2 -3.2L3.2 3.2M3.2 -3.2L-3.2 3.2" stroke="#000" stroke-width="1"/></svg></div>
<div style="position:absolute;left:170.5px;top:563px;width:15px;height:17px;border:1px solid #e9e9e9;background:#f5f5f5;border-radius:3px;"><svg style="position:absolute;left:-1px;top:-0.5px" width="15" height="16" viewBox="-7.5 -8 15 16"><g transform="translate(1.5,1)"><path d="M0 -4.5V4.5M-4.5 0H4.5M-3.2 -3.2L3.2 3.2M3.2 -3.2L-3.2 3.2" stroke="#9a9a9a" stroke-width="1"/></g><path d="M-6.5 -6 L-3.5 -4 L-6.5 -2 Z" fill="#8a8a8a"/></svg></div>
<svg style="position:absolute;left:242px;top:567.5px" width="6" height="10" viewBox="0 0 6 10"><path d="M5.5 0.5 L0.5 5 L5.5 9.5 Z" fill="#a6a6a6"/></svg>
<svg style="position:absolute;left:998.5px;top:567.5px" width="6" height="10" viewBox="0 0 6 10"><path d="M0.5 0.5 L5.5 5 L0.5 9.5 Z" fill="#a6a6a6"/></svg>
<div style="position:absolute;left:1011px;top:220px;width:16px;height:343px;background:#f0f0f0"></div>
<div style="position:absolute;left:1018px;top:237px;width:2px;height:17px;background:#8a8a8a;border-radius:1px"></div>
<div style="position:absolute;left:0;top:581px;width:1028px;height:2px;background:#8a8a8a"></div>
<div style="position:absolute;left:0;top:583px;width:1028px;height:1px;background:#fafafa"></div>
<div style="position:absolute;left:1027px;top:219px;width:1px;height:364px;background:#9a9a9a"></div>
<div class="chk" style="position:absolute;left:643px;top:598px"></div>
<div class="lbl" style="position:absolute;left:659px;top:598px;text-align:left">Atualizar preços zerados</div>
<div class="btn" style="position:absolute;left:787px;top:590px;width:105px;height:28px"><svg style="position:absolute;left:11px;top:5px" width="16" height="16" viewBox="0 0 16 16"><path d="M1.3 0.5 H13.2 L15.5 2.8 V14.7 Q15.5 15.5 14.7 15.5 H1.3 Q0.5 15.5 0.5 14.7 V1.3 Q0.5 0.5 1.3 0.5 Z" fill="#5d90e2" stroke="#3b62b0"/><rect x="2.6" y="1.1" width="10.6" height="5" fill="#dde7f8"/><rect x="2.6" y="4" width="10.6" height="2.1" fill="#c4d4f2"/><rect x="5" y="2" width="1" height="2.6" fill="#3c5ea6"/><rect x="3" y="9.8" width="10" height="5.2" fill="#f6fbf2"/><rect x="4" y="11.2" width="8" height="1" fill="#86c56a"/><rect x="4" y="12.9" width="8" height="1" fill="#86c56a"/></svg><span class="t" style="left:31px;top:8px">Gravar [F10]</span></div>
<div class="btn" style="position:absolute;left:910px;top:590px;width:105px;height:28px"><svg style="position:absolute;left:10.5px;top:7px" width="13" height="13" viewBox="0 0 16 16"><path d="M2.6 2.6 L13.4 13.4 M13.4 2.6 L2.6 13.4" stroke="#c4261a" stroke-width="4" stroke-linecap="round"/><path d="M2.6 2.6 L13.4 13.4 M13.4 2.6 L2.6 13.4" stroke="#f3412b" stroke-width="2.7" stroke-linecap="round"/></svg><span class="t" style="left:29px;top:8px">Fecha</span><span class="t" style="left:67px;top:8px;font-size:10.5px">[ESC]</span></div>
<div id="menu"><div class="hl"></div><span style="top:7px;letter-spacing:-0.12px">1 - Reajuste Calculado</span><span style="top:29px">2 - Remover o produto selecionado</span></div>
<div class="badge" style="left:528.2px;top:233.7px">1</div>
<div class="badge" style="left:752.1px;top:246.6px">2</div>
</body></html>
